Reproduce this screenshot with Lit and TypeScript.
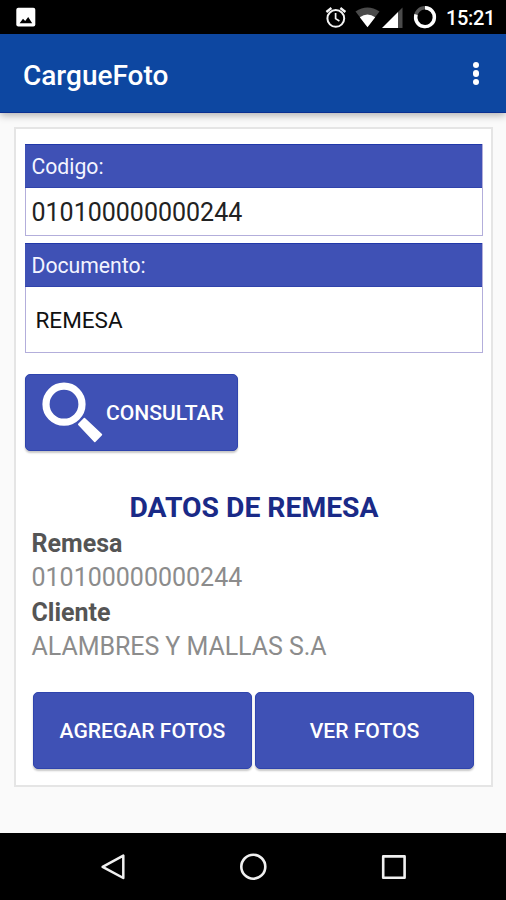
import { LitElement, html, css } from "lit";
import { customElement } from "lit/decorators.js";

@customElement("status-bar")
class StatusBar extends LitElement {
  static styles = css`
    :host { display: flex; align-items: center; justify-content: space-between; box-sizing: border-box;
      height: 34px; padding: 0 11px 0 16px; background: #000; }
    svg { display: block; }
    .right { display: flex; align-items: center; }
    .clock { color: #fff; font-size: 20px; font-weight: 500; line-height: 38px; height: 36px; width: 49px; margin-left: 9px; letter-spacing: -0.35px; white-space: nowrap; }
  `;
  render() {
    return html`
      <svg width="20" height="34" viewBox="0 0 20 34">
        <rect x="0.3" y="7.8" width="19" height="18.8" rx="2" fill="#fff" />
        <path d="M3.6 23.2 7 18.8 9.2 21 12.2 17 16.2 23.2Z" fill="#000" />
      </svg>
      <div class="right">
        <svg width="112" height="34" viewBox="325 0 112 34">
          <g fill="none" stroke="#f4f4f4" stroke-width="2">
            <circle cx="335.8" cy="18.4" r="8.4" />
            <path d="M335.6 13v5.6l3.8 2.4" stroke-width="1.7" />
            <path d="M326.4 12 331.4 8M340.4 8 345.4 12" stroke-width="2.3" />
          </g>
          <path d="M355.5 11.6Q367.5 3.2 379.5 11.6L367.5 27Z" fill="#4a4a4a" />
          <path d="M359.8 17.2Q367.5 12 375.2 17.2L367.5 27.2Z" fill="#fff" />
          <path d="M402.5 7.6V28H398V12Z" fill="#4a4a4a" />
          <path d="M398 12V28H382Z" fill="#fff" />
          <g fill="none" stroke-width="3.4">
            <circle cx="425" cy="17.2" r="9.4" stroke="#555" />
            <path d="M425 7.8A9.4 9.4 0 1 1 416 14.5" stroke="#fff" />
          </g>
        </svg>
        <span class="clock">15:21</span>
      </div>
    `;
  }
}

@customElement("app-bar")
class AppBar extends LitElement {
  static styles = css`
    :host { display: flex; align-items: center; justify-content: space-between; box-sizing: border-box;
      height: 79px; padding: 4px 27px 0 23px; background: #0d47a1; border-bottom: 1px solid #0a2f91;
      box-shadow: 0 2px 8px rgba(0, 0, 0, 0.32); position: relative; }
    .title { color: #fff; font-size: 28px; font-weight: 500; line-height: 36px; padding-top: 1px; }
    .menu { display: flex; flex-direction: column; gap: 2.3px; padding-bottom: 3px; }
    .dot { width: 6.2px; height: 6.2px; border-radius: 50%; background: #fff; }
  `;
  render() {
    return html`
      <span class="title">CargueFoto</span>
      <div class="menu"><i class="dot"></i><i class="dot"></i><i class="dot"></i></div>
    `;
  }
}

@customElement("nav-bar")
class NavBar extends LitElement {
  static styles = css`
    :host { display: flex; justify-content: center; align-items: center; gap: 112px; height: 67px; background: #000; }
    svg { display: block; }
  `;
  render() {
    return html`
      <svg width="28" height="28" viewBox="0 0 28 28" fill="none" stroke="#f0f0f0" stroke-width="2.5" stroke-linejoin="round">
        <path d="M24.3 2.6V25L3.6 13.8Z" />
      </svg>
      <svg width="28" height="28" viewBox="0 0 28 28" fill="none" stroke="#f0f0f0" stroke-width="2.6">
        <circle cx="14.3" cy="13.7" r="12" />
      </svg>
      <svg width="28" height="28" viewBox="0 0 28 28" fill="none" stroke="#f0f0f0" stroke-width="2.6" stroke-linejoin="round">
        <rect x="4.2" y="3.4" width="21.4" height="21.4" />
      </svg>
    `;
  }
}

@customElement("app-root")
class AppRoot extends LitElement {
  static styles = css`
    :host { display: flex; flex-direction: column; width: 506px; height: 900px; overflow: hidden;
      background: #fafafa; font-family: Roboto, "Liberation Sans", sans-serif; }
    main { flex: 1; padding: 14px 13px 0 14px; }
    .card { box-sizing: border-box; height: 660px; border: 2.5px solid #e5e5e5; background: #fff;
      padding: 15px 8px 0 9px; display: flex; flex-direction: column; }
    .field { box-sizing: border-box; border: 1px solid #b3aedb; border-top: 0; margin-bottom: 7px; background: #fff; }
    .code { height: 92px; }
    .doc { height: 110px; margin-bottom: 21px; }
    .label { box-sizing: border-box; height: 44px; margin: 0 0 0 -1px; padding-left: 6.5px; background: #3f51b5;
      border-top: 1px solid #2138a8; border-bottom: 1px solid #3043ab; color: #f3f4ff; font-size: 21.2px; line-height: 43px; }
    .value { padding-left: 5.5px; font-size: 25px; line-height: 50px; color: #222; }
    .select { padding-left: 9.5px; font-size: 22.5px; line-height: 66px; color: #111; }
    .btn { box-sizing: border-box; height: 77px; border-radius: 5px; background: #3f51b5; border: 1px solid #2f44ad;
      box-shadow: 0 2px 2px rgba(0, 0, 0, 0.22); color: #fff; font-weight: 500; font-size: 21.1px;
      display: flex; align-items: center; justify-content: center; white-space: nowrap; }
    .query { width: 213px; justify-content: flex-start; padding-left: 15px; }
    .query svg { display: block; margin-right: 1px; }
    .heading { margin: 38px 0 0 0; text-align: center; color: #1a2a87; font-size: 28.3px; font-weight: 700; line-height: 37px; }
    .data { padding-left: 6.5px; padding-top: 1px; font-size: 25px; line-height: 34.4px; }
    .name { color: #555; font-weight: 700; }
    .line { font-weight: 400; color: #8c8c8c; }
    .line.client { letter-spacing: -0.06px; }
    .actions { display: grid; grid-template-columns: 1fr 1fr; gap: 3px; margin: 27px 9px 0 8px; }
  `;
  render() {
    return html`
      <status-bar></status-bar>
      <app-bar></app-bar>
      <main>
        <section class="card">
          <div class="field code">
            <div class="label">Codigo:</div>
            <div class="value">010100000000244</div>
          </div>
          <div class="field doc">
            <div class="label">Documento:</div>
            <div class="select">REMESA</div>
          </div>
          <div class="btn query">
            <svg width="64" height="75" viewBox="41 375 64 75">
              <circle cx="64" cy="404.2" r="18" fill="none" stroke="#fff" stroke-width="7.2" />
              <path d="M78.8 424.4 84.4 418.6 101.4 434.6 94.8 441.4Z" fill="#fff" stroke="#fff" stroke-width="1.6" stroke-linejoin="round" />
            </svg>
            <span>CONSULTAR</span>
          </div>
          <div class="heading">DATOS DE REMESA</div>
          <div class="data">
            <div class="name">Remesa</div>
            <div class="line">010100000000244</div>
            <div class="name">Cliente</div>
            <div class="line client">ALAMBRES Y MALLAS S.A</div>
          </div>
          <div class="actions">
            <div class="btn"><span>AGREGAR FOTOS</span></div>
            <div class="btn"><span>VER FOTOS</span></div>
          </div>
        </section>
      </main>
      <nav-bar></nav-bar>
    `;
  }
}
